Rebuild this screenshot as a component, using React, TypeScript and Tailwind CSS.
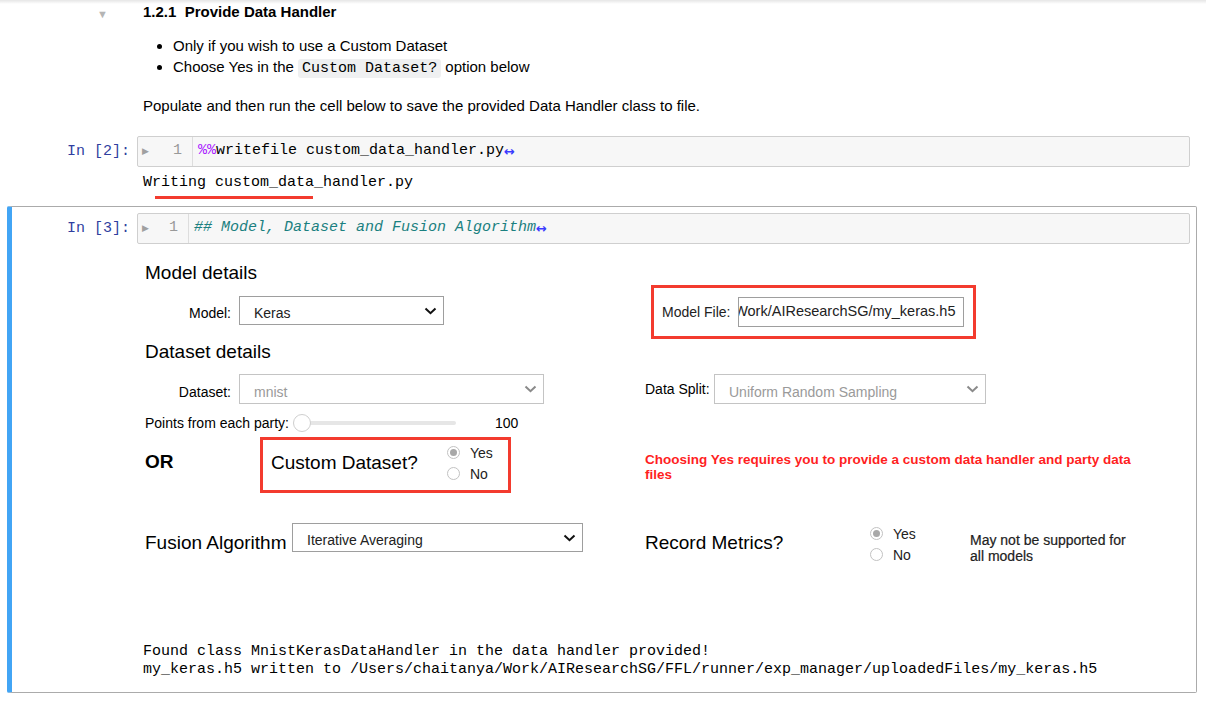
import React from 'react'

const mono = "font-['Liberation_Mono','DejaVu_Sans_Mono',monospace]"

function Chevron({ disabled }: { disabled?: boolean }) {
  return (
    <svg width="13" height="8" viewBox="0 0 13 8" className="shrink-0">
      <polyline points="1.5,1.5 6.5,6.2 11.5,1.5" fill="none" stroke={disabled ? '#8a8a8a' : '#111'} strokeWidth="2" />
    </svg>
  )
}

function FakeSelect({ value, width, height = 29, disabled }: { value: string; width: number; height?: number; disabled?: boolean }) {
  return (
    <div
      className={`flex items-center justify-between pl-[14px] pr-[6px] pt-[5px] bg-white border ${disabled ? 'border-[#c4c4c4] text-[#9a9a9a]' : 'border-[#9e9e9e] text-[#222]'} text-[14px]`}
      style={{ width, height }}
    >
      <span className="leading-none">{value}</span>
      <span className="-mt-[5px]"><Chevron disabled={disabled} /></span>
    </div>
  )
}

function Radio({ label, checked }: { label: string; checked?: boolean }) {
  return (
    <div className="flex items-center h-[21px]">
      <span className="w-[13px] h-[13px] rounded-full border border-[#c2c2c2] bg-white flex items-center justify-center shrink-0">
        {checked && <span className="w-[7px] h-[7px] rounded-full bg-[#a8a8a8]" />}
      </span>
      <span className="ml-[10px] text-[14px] text-[#222] leading-none">{label}</span>
    </div>
  )
}

function FoldMark() {
  return <span className="font-['DejaVu_Sans',sans-serif] text-[#3b3bff] text-[13px] font-bold">↔</span>
}

function InputArea({ gutter, children }: { gutter: number; children: React.ReactNode }) {
  return (
    <div className="flex w-[1053px] h-[31px] bg-[#f7f7f7] border border-[#cfcfcf] rounded-[2px]">
      <div className="flex items-center justify-between pl-[4px] pr-[10px] border-r border-[#dddddd]" style={{ width: gutter }}>
        <span className="text-[9px] text-[#a0a0a0]">▶</span>
        <span className={`${mono} text-[15px] text-[#999]`}>1</span>
      </div>
      <div className={`${mono} text-[15px] flex items-center pl-[5px] whitespace-pre`}>{children}</div>
    </div>
  )
}

function Prompt({ n }: { n: number }) {
  return (
    <div className={`${mono} w-[125px] shrink-0 text-right pr-[7px] text-[15px] text-[#303f9f] leading-[31px]`}>
      In [{n}]:
    </div>
  )
}

export default function App() {
  return (
    <div className="w-[1206px] h-[706px] bg-white overflow-hidden relative font-['Liberation_Sans',Arial,sans-serif] text-black">
      <div className="absolute top-0 inset-x-0 h-[4px] bg-gradient-to-b from-black/10 to-transparent" />

      {/* markdown cell */}
      <div className="flex">
        <div className="w-[143px] shrink-0 pl-[97px] pt-[1px]">
          <span className="text-[11px] text-[#b5b5b5]">▼</span>
        </div>
        <div>
          <div className="text-[15px] font-bold leading-[20px] mt-[2px] whitespace-pre">1.2.1  Provide Data Handler</div>
          <ul className="list-disc pl-[30px] mt-[13px] text-[15px] leading-[21px]">
            <li>Only if you wish to use a Custom Dataset</li>
            <li>
              Choose Yes in the{' '}
              <code className={`${mono} bg-[#eff0f1] px-[4px] py-[1px] rounded-[3px] text-[15px]`}>Custom Dataset?</code> option below
            </li>
          </ul>
          <p className="mt-[16px] text-[15px] leading-[21px]">
            Populate and then run the cell below to save the provided Data Handler class to file.
          </p>
        </div>
      </div>

      {/* cell 2 */}
      <div className="ml-[7px] w-[1190px] mt-[20px] border-l-[5px] border-transparent">
        <div className="flex">
          <Prompt n={2} />
          <InputArea gutter={55}>
            <span className="text-[#aa22ff]">%%</span>
            <span>writefile custom_data_handler.py</span>
            <FoldMark />
          </InputArea>
        </div>
        <div className={`${mono} ml-[131px] mt-[7px] text-[15px] leading-[18px]`}>Writing custom_data_handler.py</div>
        <div className="ml-[143px] mt-[4px] w-[158px] h-[3px] bg-[#f33b2e]" />
      </div>

      {/* cell 3 - selected */}
      <div className="ml-[7px] mt-[7px] w-[1190px] h-[487px] border border-[#ababab] border-l-[5px] border-l-[#42a5f5] rounded-[2px] pt-[6px]">
        <div className="flex">
          <Prompt n={3} />
          <InputArea gutter={51}>
            <span className="text-[#1a8080] italic">## Model, Dataset and Fusion Algorithm</span>
            <FoldMark />
          </InputArea>
        </div>

        <div className="ml-[131px] pl-[2px]">
          {/* Model details */}
          <div className="mt-[17px] text-[19px] leading-[23px]">Model details</div>
          <div className="flex h-[54px] mt-[1px]">
            <div className="w-[500px] flex items-start">
              <div className="flex items-center mt-[11px]">
                <div className="w-[86px] text-right text-[14px] pt-[6px]">Model:</div>
                <div className="ml-[8px]"><FakeSelect value="Keras" width={205} /></div>
              </div>
            </div>
            <div className="ml-[6px] w-[325px] h-[54px] border-[3px] border-[#f33b2e] flex items-center pl-[8px]">
              <span className="text-[14px] text-[#222]">Model File:</span>
              <div className="ml-[8px] w-[226px] h-[30px] border border-[#9e9e9e] bg-white overflow-hidden flex items-center justify-end pr-[8px]">
                <span className="text-[14.5px] text-[#222] whitespace-nowrap">Work/AIResearchSG/my_keras.h5</span>
              </div>
            </div>
          </div>

          {/* Dataset details */}
          <div className="mt-[1px] text-[19px] leading-[23px]">Dataset details</div>
          <div className="flex mt-[11px] h-[30px]">
            <div className="w-[500px] flex items-center">
              <div className="w-[86px] text-right text-[14px] pt-[6px]">Dataset:</div>
              <div className="ml-[8px]"><FakeSelect value="mnist" width={305} height={30} disabled /></div>
            </div>
            <div className="flex items-center">
              <div className="text-[14px] w-[69px]">Data Split:</div>
              <FakeSelect value="Uniform Random Sampling" width={272} height={30} disabled />
            </div>
          </div>

          {/* slider */}
          <div className="flex items-center h-[28px] mt-[5px]">
            <span className="text-[14px] w-[148px]">Points from each party:</span>
            <div className="relative w-[163px] h-[18px] flex items-center">
              <div className="w-full h-[4px] rounded-full bg-[#e6e6e6]" />
              <div className="absolute left-0 top-0 w-[18px] h-[18px] rounded-full bg-white border border-[#cfcfcf]" />
            </div>
            <span className="ml-[39px] text-[14px]">100</span>
          </div>

          {/* custom dataset */}
          <div className="flex h-[56px]">
            <div className="w-[500px] flex">
              <div className="w-[115px] flex items-center text-[19px] font-bold pb-[6px]">OR</div>
              <div className="w-[251px] h-[56px] border-[3px] border-[#f33b2e] flex items-center pl-[8px]">
                <div className="w-[176px] text-[19px] leading-[23px] pb-[6px]">Custom Dataset?</div>
                <div className="flex flex-col -mt-[4px]">
                  <Radio label="Yes" checked />
                  <Radio label="No" />
                </div>
              </div>
            </div>
            <div className="w-[492px] text-[13.5px] leading-[15px] font-bold text-[#ff1f1f] pt-[15px]">
              Choosing Yes requires you to provide a custom data handler and party data files
            </div>
          </div>

          {/* fusion / metrics */}
          <div className="flex items-start mt-[30px] h-[40px]">
            <div className="w-[500px] flex items-start">
              <div className="w-[147px] text-[19px] leading-[23px] mt-[8px]">Fusion Algorithm</div>
              <FakeSelect value="Iterative Averaging" width={291} />
            </div>
            <div className="w-[225px] text-[19px] leading-[23px] mt-[8px]">Record Metrics?</div>
            <div className="w-[100px] flex flex-col">
              <Radio label="Yes" checked />
              <Radio label="No" />
            </div>
            <div className="w-[168px] mt-[9px] text-[14px] leading-[16px] text-[#222] [-webkit-text-stroke:0.2px_#222]">
              May not be supported for all models
            </div>
          </div>
        </div>

        <div className={`${mono} ml-[131px] mt-[80px] text-[15px] leading-[18px] whitespace-pre`}>
          <div>Found class MnistKerasDataHandler in the data handler provided!</div>
          <div>my_keras.h5 written to /Users/chaitanya/Work/AIResearchSG/FFL/runner/exp_manager/uploadedFiles/my_keras.h5</div>
        </div>
      </div>
    </div>
  )
}
